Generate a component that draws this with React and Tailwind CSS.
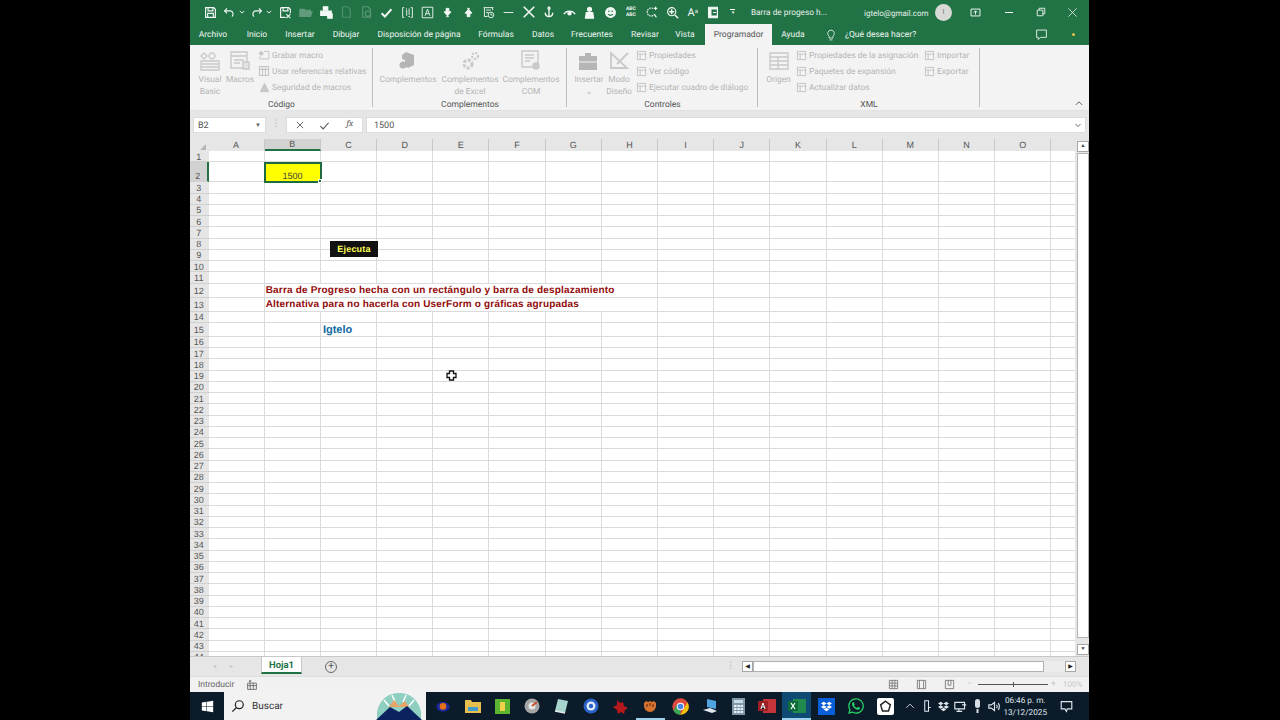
import React from "react";
import { FaWhatsapp, FaDropbox, FaWindows } from "react-icons/fa";

const S = ({ w = 14, h = 14, vb = "0 0 16 16", c = "", children }) => (
  <svg width={w} height={h} viewBox={vb} fill="none" stroke="currentColor" strokeWidth="1.4" className={c}>{children}</svg>
);

const Q = ({ w = "w-[20.3px]", children }) => <div className={`${w} h-full flex items-center justify-center shrink-0`}>{children}</div>;
const Chev = () => <S w={6} h={6}><path d="M2 5l6 6 6-6" strokeWidth="2.500"/></S>;

function QuickBar() {
  return (
    <div className="h-[24px] bg-[#217346] text-[#f4f8f5] flex items-center pl-[10px] shrink-0">
      <Q><S w={13} h={13}><path d="M2 2h10l2 2v10H2z"/><path d="M5 2v4h6V2M4.500 14V9h7v5"/></S></Q>
      <div className="w-[27px] h-full flex items-center justify-center gap-[3px] shrink-0"><S w={13} h={13}><path d="M5 3 2 6l3 3"/><path d="M2 6h7a4 4 0 0 1 2 7"/></S><Chev/></div>
      <div className="w-[28px] h-full flex items-center justify-center gap-[3px] shrink-0"><S w={13} h={13}><path d="M11 3l3 3-3 3"/><path d="M14 6H7a4 4 0 0 0-2 7"/></S><Chev/></div>
      <Q><S w={13} h={13}><path d="M2 2h10l2 2v5M2 2v12h6"/><path d="M5 2v4h6V2M9 10l5 5M14 10l-5 5"/></S></Q>
      <Q><S c="opacity-30"><path d="M1 13V5h5l1 1h6v7zM3 13l2-5h10l-2 5" fill="currentColor"/></S></Q>
      <Q><S><path d="M5 2h5v4H5z" fill="currentColor"/><path d="M2 7h12v5H2z" fill="currentColor"/><path d="M10 10h5v5h-5z" fill="currentColor"/></S></Q>
      <Q><S c="opacity-20"><path d="M4 2h6l3 3v9H4z"/></S></Q>
      <Q><S c="opacity-25"><path d="M3 2h6l3 3v9H3z"/><circle cx="9" cy="10" r="3"/></S></Q>
      <Q><S w={13} h={13}><path d="M2 9l4 4 8-9" strokeWidth="2.400"/></S></Q>
      <Q><S w={13} h={13}><path d="M4 2H2v12h2M12 2h2v12h-2M6 5h1v7M10 3v8M6 3h1M9 13h2" strokeWidth="1.100"/></S></Q>
      <Q><S w={13} h={13}><path d="M1.500 1.500h13v13h-13z" strokeWidth="1.100"/><path d="M5 12l3-8 3 8M6 9.500h4" strokeWidth="1.100"/></S></Q>
      <Q><S w={11} h={11}><path d="M6 2h4v5h3l-5 6-5-6h3zM6 14h4" fill="currentColor"/></S></Q>
      <Q><S w={11} h={11}><path d="M6 14h4V9h3L8 3 3 9h3zM6 2h4" fill="currentColor"/></S></Q>
      <Q><S w={13} h={13}><path d="M2 2h12M3 2v11h4M13 2v3M5 5h6M5 8h3" strokeWidth="1.100"/><circle cx="11" cy="11" r="3.500" strokeWidth="1.100"/><path d="M11 9v2h2" strokeWidth="1.100"/></S></Q>
      <Q><S w={13} h={13}><path d="M2 8h12" strokeWidth="1.100"/></S></Q>
      <Q><S><path d="M2 2l12 12M14 2 2 14" strokeWidth="1.800"/></S></Q>
      <Q><S w={12} h={12}><path d="M8 1v13M3 9c0 3 2 5 5 5s5-2 5-5" strokeWidth="1.800"/><circle cx="8" cy="3" r="1.500"/></S></Q>
      <Q><S w={13} h={13}><path d="M1 10c3-5 11-5 14 0" strokeWidth="1.500"/><circle cx="8" cy="9" r="2" fill="currentColor"/></S></Q>
      <Q><S w={13} h={13}><circle cx="8" cy="4" r="2.500" fill="currentColor"/><path d="M3 15l1-7h8l1 7z" fill="currentColor"/></S></Q>
      <Q><S w={13} h={13}><circle cx="8" cy="8" r="6" fill="currentColor"/><circle cx="6" cy="6.500" r="1" fill="#217346" stroke="none"/><circle cx="10" cy="6.500" r="1" fill="#217346" stroke="none"/><path d="M5 10c2 2 4 2 6 0" stroke="#217346"/></S></Q>
      <Q w="w-[21px]"><div className="text-[5px] leading-[6px] font-bold text-center">ABC<br/>ABC</div></Q>
      <Q w="w-[21px]"><S w={13} h={13}><path d="M10 3a5 5 0 1 0 2 7" strokeDasharray="2 1"/><path d="M12 11l2 3M13 1v4M11 3h4"/></S></Q>
      <Q><S w={13} h={13}><circle cx="7" cy="7" r="5"/><path d="M11 11l4 4M4 7h6M7 4v6" strokeWidth="1.800"/></S></Q>
      <Q><span className="text-[11px] leading-none">A<sup className="text-[6px]">a</sup></span></Q>
      <Q w="w-[21px]"><S w={12} h={13}><path d="M2 1h12v14H2z" fill="currentColor"/><path d="M6 4h7v8H6z" fill="#217346" stroke="none"/><path d="M8 8h4" /></S></Q>
      <div className="w-[18px] flex flex-col items-center gap-[1px]"><div className="w-[5px] h-[1px] bg-white"/><div className="text-[5px] leading-none">▾</div></div>
      <span className="ml-[9px] w-[113px] pt-[3px] text-[8.300px] text-[#e8f0ea] whitespace-nowrap">Barra de progeso h...</span>
      <span className="w-[71px] pt-[3px] text-[8px] text-[#e8f0ea] whitespace-nowrap">igtelo@gmail.com</span>
      <div className="w-[17px] h-[17px] rounded-full bg-[#d9d9d6] text-[#777] text-[7px] flex items-center justify-center">I</div>
      <div className="ml-[15px] w-[18px] flex justify-center"><S w={11} h={11}><path d="M1.500 3h13v10h-13z"/><path d="M8 11V6M5.500 8 8 5.500 10.500 8"/></S></div>
      <div className="ml-[15px] w-[18px] flex justify-center"><div className="w-[8px] h-[1px] bg-white"/></div>
      <div className="ml-[14px] w-[18px] flex justify-center"><S w={10} h={10}><path d="M2 5h9v9H2zM5 5V2h9v9h-3"/></S></div>
      <div className="ml-[14px] w-[18px] flex justify-center"><S w={11} h={11}><path d="M2 2l12 12M14 2 2 14" strokeWidth="1.100"/></S></div>
    </div>
  );
}

const tabs = [["Archivo","w-[46px]"],["Inicio","w-[42px]"],["Insertar","w-[44px]"],["Dibujar","w-[48px]"],["Disposición de página","w-[98px]"],["Fórmulas","w-[56px]"],["Datos","w-[38px]"],["Frecuentes","w-[60px]"],["Revisar","w-[46px]"],["Vista","w-[34px]"]];

function Tabs() {
  return (
    <div className="h-[21px] bg-[#217346] text-[#eef5f0] flex items-stretch text-[8.500px] shrink-0">
      {tabs.map(([t, w]) => <div key={t} className={`${w} flex items-center justify-center whitespace-nowrap shrink-0 pt-[2px]`}>{t}</div>)}
      <div className="w-[67px] bg-[#f3f3f3] text-[#555] flex items-center justify-center shrink-0 ml-[3px] pt-[2px]">Programador</div>
      <div className="w-[42px] flex items-center justify-center shrink-0 pt-[2px]">Ayuda</div>
      <div className="w-[20px] flex items-center justify-center ml-[7px] shrink-0"><S w={12} h={12}><path d="M8 1.500a4.500 4.500 0 0 0-2.500 8.200V12h5V9.700A4.500 4.500 0 0 0 8 1.500zM6 14.500h4" strokeWidth="1.100"/></S></div>
      <div className="flex items-center whitespace-nowrap ml-[4px] pt-[2px]">¿Qué desea hacer?</div>
      <div className="flex-1"/>
      <div className="w-[16px] flex items-center justify-center mr-[16px]"><S w={13} h={13}><path d="M2 2.500h12v9H7l-3 2.500v-2.500H2z" strokeWidth="1.100"/></S></div>
      <div className="w-[16px] flex items-center justify-center mr-[8px]"><div className="w-[3px] h-[3px] rounded-full bg-[#e8c04a]"/></div>
    </div>
  );
}

const Big = ({ w, icon, children }) => (
  <div className={`${w} shrink-0 flex flex-col items-center text-center leading-[12px] pt-[4px]`}>
    <div className="h-[23px] flex items-center justify-center text-[#c9c9c9]">{icon}</div>
    <div className="whitespace-nowrap mt-[2px]">{children}</div>
  </div>
);
const Small = ({ icon, children }) => (
  <div className="h-[16px] flex items-center whitespace-nowrap">
    <span className="w-[14px] h-[14px] flex items-center justify-center text-[#c4c4c4] mr-[1px] shrink-0">{icon}</span>
    <span className="pt-[3px]">{children}</span>
  </div>
);
const Group = ({ w, label, children }) => (
  <div className={`${w} shrink-0 h-full flex flex-col relative`}>
    <div className="flex-1 flex items-start min-h-0">{children}</div>
    <div className="h-[11px] text-center text-[#555] text-[8.500px] leading-[12px]">{label}</div>
    <div className="absolute right-0 top-[3px] bottom-[3px] w-[1px] bg-[#bdbdbd]"/>
  </div>
);

const g = {
  doc: <S w={11} h={11}><path d="M2 2h12v12H2zM2 6h12M6 6v8"/></S>,
  tri: <S w={11} h={11}><path d="M8 2l6 12H2z" fill="#c9c9c9"/></S>,
  gear: <S w={22} h={22} vb="0 0 22 22"><circle cx="9" cy="14" r="4" strokeWidth="3" strokeDasharray="3 1.500"/><circle cx="16" cy="6" r="3" strokeWidth="2.200" strokeDasharray="2 1.500"/></S>,
};

function Ribbon() {
  return (
    <div className="h-[66px] bg-[#f3f3f3] text-[#b4b4b4] text-[8.400px] flex shrink-0 border-b border-[#e2e2e2] relative">
      <Group w="w-[183px]" label="Código">
        <div className="flex">
          <Big w="w-[38px] ml-[1px]" icon={<S w={24} h={22} vb="0 0 24 22"><path d="M3 11h18v9H3zM3 14h18M3 17h18M6 3l3 3-3 3-3-3zM14 3a3 3 0 1 0 .1 0"/></S>}>Visual<br/>Basic</Big>
          <Big w="w-[22px]" icon={<S w={22} h={22} vb="0 0 22 22"><path d="M2 2h16v16H2zM2 6h16M5 10h10M5 13h6"/><path d="M14 12h6v7h-6z" fill="#e3e3e3"/></S>}>Macros</Big>
        </div>
        <div className="ml-[6px] pt-[2px]">
          <Small icon={<S w={12} h={11}><circle cx="4" cy="5" r="2.500" fill="#c4c4c4"/><path d="M8 2h7v11H2V9"/></S>}>Grabar macro</Small>
          <Small icon={<S w={12} h={12}><path d="M2 2h12v12H2zM2 6h12M6 2v12M10 2v12"/></S>}>Usar referencias relativas</Small>
          <Small icon={g.tri}>Seguridad de macros</Small>
        </div>
      </Group>
      <Group w="w-[194px]" label="Complementos">
        <div className="flex pl-[5px]">
          <Big w="w-[60px]" icon={<svg width="20" height="20" viewBox="0 0 20 20" fill="#b5b5b5"><path d="M8 1l8 3v10l-6 3-3-2V9L4 8V4z"/><circle cx="5" cy="14" r="3.500"/></svg>}>Complementos</Big>
          <Big w="w-[64px]" icon={g.gear}>Complementos<br/>de Excel</Big>
          <Big w="w-[58px]" icon={<S w={22} h={22} vb="0 0 22 22"><path d="M2 1h16v16H2zM5 5h9M5 8h9M5 11h5"/><circle cx="16" cy="16" r="3" fill="#c9c9c9"/></S>}>Complementos<br/>COM</Big>
        </div>
      </Group>
      <Group w="w-[191px]" label="Controles">
        <div className="flex pl-[7px]">
          <Big w="w-[30px]" icon={<svg width="22" height="20" viewBox="0 0 22 20" fill="#b5b5b5"><path d="M1 5h18v14H1zM7 5V2h6v3" /><path d="M1 11h18" stroke="#f3f3f3"/></svg>}>Insertar<br/>⌄</Big>
          <Big w="w-[30px]" icon={<S w={22} h={22} vb="0 0 22 22"><path d="M3 3v15h16zM20 3 9 14" strokeWidth="1.800"/></S>}>Modo<br/>Diseño</Big>
          <div className="pt-[2px]">
            <Small icon={g.doc}>Propiedades</Small>
            <Small icon={g.doc}>Ver código</Small>
            <Small icon={g.doc}>Ejecutar cuadro de diálogo</Small>
          </div>
        </div>
      </Group>
      <Group w="w-[222px]" label="XML">
        <div className="flex pl-[7px]">
          <Big w="w-[27px]" icon={<S w={22} h={20} vb="0 0 22 20"><path d="M2 2h18v16H2zM2 6h18M2 10h18M2 14h18M10 6v12"/></S>}>Origen</Big>
          <div className="ml-[2px] pt-[2px] w-[128px]">
            <Small icon={g.doc}>Propiedades de la asignación</Small>
            <Small icon={g.doc}>Paquetes de expansión</Small>
            <Small icon={g.doc}>Actualizar datos</Small>
          </div>
          <div className="pt-[2px]">
            <Small icon={g.doc}>Importar</Small>
            <Small icon={g.doc}>Exportar</Small>
          </div>
        </div>
      </Group>
      <div className="flex-1 flex items-end justify-end pr-[5px] pb-[2px] text-[#555]"><S w={10} h={10}><path d="M3 11l5-5 5 5" strokeWidth="1.500"/></S></div>
    </div>
  );
}

function FormulaBar() {
  return (
    <div className="h-[28px] bg-[#e6e6e6] flex items-start pt-[6px] pl-[3px] pr-[3px] text-[#555] text-[9px] shrink-0">
      <div className="w-[73px] h-[16px] bg-white border border-[#dcdcdc] flex items-center pl-[4px] justify-between pr-[4px]"><span className="pt-[3px]">B2</span><span className="text-[6px] text-[#666]">▼</span></div>
      <div className="w-[20px] h-[16px] flex items-center justify-center text-[#aaa] text-[9px]">⋮</div>
      <div className="w-[77px] h-[16px] bg-white border border-[#dcdcdc] flex items-center shrink-0">
        <div className="w-[26px] flex justify-center"><S w={10} h={10}><path d="M3 3l10 10M13 3 3 13"/></S></div>
        <div className="w-[26px] flex justify-center"><S w={11} h={11}><path d="M2 9l4 4 8-9" strokeWidth="1.600"/></S></div>
        <div className="w-[25px] text-center font-serif italic text-[9px]">fx</div>
      </div>
      <div className="ml-[3px] flex-1 h-[16px] bg-white border border-[#dcdcdc] flex items-center pl-[7px] pr-[3px] justify-between"><span className="pt-[3px]">1500</span><S w={8} h={8}><path d="M3 6l5 5 5-5" strokeWidth="1.800"/></S></div>
    </div>
  );
}

const cols = "ABCDEFGHIJKLMNO".split("");
const rowH = { 2: "h-[20px]", 12: "h-[14px]", 13: "h-[14px]", 15: "h-[14px]" };
const rows = Array.from({ length: 44 }, (_, i) => i + 1);
const cellText = {
  "12B": <span className="relative z-10 text-[10px] font-bold text-[#920b0b] pl-[1px] font-['Liberation_Sans'] tracking-[0.18px]">Barra de Progreso hecha con un rectángulo y barra de desplazamiento</span>,
  "13B": <span className="relative z-10 text-[10px] font-bold text-[#920b0b] pl-[1px] font-['Liberation_Sans'] tracking-[0.18px]">Alternativa para no hacerla con UserForm o gráficas agrupadas</span>,
  "15C": <span className="relative z-10 text-[11px] font-bold text-[#0f6aa3] pl-[2px] pt-[2px] font-['Liberation_Sans']">Igtelo</span>,
};
const noRight = (r, c) => (r === 12 || r === 13) && "BCDEFG".includes(c);

function Sheet() {
  return (
    <div className="flex-1 min-w-0 flex flex-col relative overflow-hidden">
      <div className="h-[12px] flex bg-[#e6e6e6] text-[#555] text-[9px] shrink-0 font-['Liberation_Sans']">
        <div className="w-[18.500px] flex items-end justify-end pr-[3px] pb-[1px] shrink-0"><div className="w-0 h-0 border-l-[6px] border-l-transparent border-b-[6px] border-b-[#b5b5b5]"/></div>
        {cols.map(c => (
          <div key={c} className={`w-[56.2px] shrink-0 flex items-center justify-center border-r border-[#c8c8c8] pt-[2px] ${c === "B" ? "bg-[#d2d2d2] border-b-2 border-b-[#217346]" : ""}`}>{c}</div>
        ))}
        <div className="flex-1"/>
      </div>
      <div className="flex-1 min-h-0 overflow-hidden bg-white">
        {rows.map(r => (
          <div key={r} className={`${rowH[r] || "h-[11.25px]"} flex`}>
            <div className={`w-[18.500px] shrink-0 text-[9px] leading-none text-[#555] flex justify-center pr-[1px] font-['Liberation_Sans'] border-b border-[#d0d0d0] ${r === 2 ? "items-end bg-[#d2d2d2] border-r-2 border-r-[#217346]" : "items-center pt-[2px] bg-[#e6e6e6]"}`}>{r}</div>
            {cols.map(c => (
              <div key={c} className={`w-[56.2px] shrink-0 border-b border-[#dadada] flex items-center whitespace-nowrap relative ${noRight(r, c) ? "" : "border-r"} ${r === 2 && c === "B" ? "bg-[#ffff00]" : ""}`}>
                {cellText[r + c]}
              </div>
            ))}
            <div className="flex-1 border-b border-[#dadada]"/>
          </div>
        ))}
      </div>
      <div className="absolute left-[73.500px] top-[23px] w-[58px] h-[20.500px] border-2 border-[#1e6b41] flex items-end justify-center text-[9px] leading-[10px] text-[#444] font-['Liberation_Sans']">
        <span>1500</span>
        <div className="absolute -right-[2px] -bottom-[2px] w-[4px] h-[4px] bg-[#1e6b41] border border-white"/>
      </div>
      <div className="absolute left-[140px] top-[102px] w-[48px] h-[16px] bg-[#111] text-[#ffff55] text-[9px] font-bold font-['Liberation_Sans'] tracking-[0.2px] flex items-center justify-center pt-[1px]">Ejecuta</div>
      <svg className="absolute left-[256px] top-[231px]" width="11" height="11" viewBox="0 0 11 11"><path d="M3.500 1h4v2.500H10v4H7.500V10h-4V7.500H1v-4h2.500z" fill="#fff" stroke="#111" strokeWidth="1.300"/></svg>
    </div>
  );
}

function VScroll() {
  return (
    <div className="w-[14px] shrink-0 bg-[#e6e6e6] flex flex-col items-start pt-[2px] pb-[1px] pl-[2px]">
      <div className="w-[12px] h-[11px] bg-white border border-[#a8a8a8] flex items-center justify-center text-[#333] text-[5px]">▲</div>
      <div className="w-[12px] h-[485px] bg-white border border-[#b5b5b5] mt-[1px]"/>
      <div className="flex-1"/>
      <div className="w-[12px] h-[11px] bg-white border border-[#a8a8a8] flex items-center justify-center text-[#333] text-[5px]">▼</div>
    </div>
  );
}

function SheetTabs() {
  return (
    <div className="h-[20px] bg-[#e6e6e6] border-t border-[#c8c8c8] flex items-start shrink-0 text-[#555]">
      <div className="w-[71px] flex justify-end gap-[14px] pr-[28px] pt-[5px] text-[#c2c2c2] text-[6px]"><span>◂</span><span>▸</span></div>
      <div className="w-[41px] h-[17px] pt-[4px] bg-white border-b-2 border-b-[#217346] border-x border-x-[#c8c8c8] flex items-center justify-center text-[#217346] font-bold text-[9.500px] shrink-0">Hoja1</div>
      <div className="ml-[23px] mt-[4px] w-[12px] h-[12px] rounded-full border border-[#666] flex items-center justify-center text-[10px] leading-none">+</div>
      <div className="ml-[389px] mt-[4px] text-[#aaa] text-[9px] leading-[10px]">⋮</div>
      <div className="ml-[7px] mt-[4px] w-[334px] h-[11px] flex shrink-0 bg-[#ececec]">
        <div className="w-[11px] h-[11px] bg-white border border-[#a8a8a8] flex items-center justify-center text-[#222] text-[6px]">◀</div>
        <div className="w-[291px] h-[11px] bg-white border border-[#b0b0b0]"/>
        <div className="flex-1"/>
        <div className="w-[11px] h-[11px] bg-white border border-[#a8a8a8] flex items-center justify-center text-[#222] text-[6px]">▶</div>
      </div>
    </div>
  );
}

function Status() {
  return (
    <div className="h-[16px] bg-[#f1f1f1] border-t border-[#dcdcdc] flex items-center text-[#666] text-[8.500px] shrink-0">
      <span className="ml-[8px] w-[49px] pt-[2px]">Introducir</span>
      <S w={10} h={10}><path d="M1 5h14v10H1zM1 9h14M5 5v10M10 5v10M4 1h2v2H4z"/></S>
      <div className="flex-1"/>
      <S w={11} h={11} c="mr-[17px]"><path d="M2 2h12v12H2zM2 6h12M2 10h12M6 2v12M10 2v12" strokeWidth="1.100"/></S>
      <S w={11} h={11} c="mr-[17px]"><path d="M2 2h12v12H2zM5 2v12M11 2v12" strokeWidth="1.100"/></S>
      <S w={11} h={11} c="mr-[12px]"><path d="M2 2h12v12H2zM6 2v7h4V2" strokeWidth="1.100"/></S>
      <span className="text-[#c4c4c4] w-[11px]">−</span>
      <div className="w-[70px] h-[1px] bg-[#555] relative"><div className="absolute left-[35px] -top-[2px] w-[1px] h-[5px] bg-[#555]"/></div>
      <span className="text-[#c4c4c4] ml-[3px] w-[12px]">+</span>
      <span className="text-[#c8c8c8] text-[8px] w-[26px]">100%</span>
    </div>
  );
}

const T = ({ w = "w-[29.600px]", active, bar, children }) => (
  <div className={`${w} h-full shrink-0 flex items-center justify-center relative ${active ? "bg-[#0f4a75]" : ""}`}>
    {children}
    {bar && <div className="absolute left-0 right-0 bottom-0 h-[2px] bg-[#9fd0ec]"/>}
  </div>
);

function Taskbar() {
  return (
    <div className="h-[28px] bg-[#0c1b2a] flex items-stretch shrink-0 overflow-hidden">
      <div className="w-[34px] flex items-center justify-center text-white"><FaWindows size={13}/></div>
      <div className="w-[202px] mr-[2.500px] bg-[#f2f2f2] flex items-center text-[#333] text-[10px] relative overflow-hidden shrink-0">
        <S w={14} h={14} c="ml-[7px] mr-[7px] text-[#222]"><circle cx="9.500" cy="6.500" r="4.500"/><path d="M6 10l-4.500 4.500"/></S>
        Buscar
        <div className="absolute right-[4px] top-0 w-[46px] h-[28px] overflow-hidden">
          <svg width="46" height="28" viewBox="0 0 46 28">
            <path d="M1 20C3 8 12 1 23 1s20 7 22 19v8H1z" fill="#8ecfc0"/>
            <path d="M8 8l5 6M16 3l3 7M30 3l-3 7M38 8l-5 6" stroke="#fff" strokeWidth="1.500"/>
            <path d="M18 8l5 6 6-5 4 6-20 0z" fill="#e8a468"/>
            <path d="M0 28l14-13 9 5 8-6 15 14z" fill="#0a2260"/>
          </svg>
        </div>
      </div>
      <T><svg width="14" height="14" viewBox="0 0 16 16"><ellipse cx="8" cy="9" rx="7.500" ry="5.500" fill="#1a2a9c"/><circle cx="8" cy="8.500" r="3.800" fill="#e8711c"/></svg></T>
      <T><svg width="16" height="14" viewBox="0 0 16 14"><path d="M0 1h6l1 2h9v11H0z" fill="#e9bf4d"/><path d="M3 8h10v4H3z" fill="#3f9bd0"/></svg></T>
      <T><svg width="15" height="15" viewBox="0 0 15 15"><path d="M0 0h15v15H0z" fill="#5cb531"/><path d="M5 3h5v9H5z" fill="#f0d24a"/></svg></T>
      <T><svg width="16" height="16" viewBox="0 0 16 16"><circle cx="8" cy="8" r="7.500" fill="#a5a5a5"/><circle cx="8" cy="8" r="3.500" fill="#e8e8e8"/><path d="M8 8l5-4" stroke="#c8502c" strokeWidth="2"/></svg></T>
      <T><svg width="15" height="16" viewBox="0 0 15 16"><path d="M4 1l10 2-3 12-10-2z" fill="#a8d4d0"/><path d="M1 13l10 2" stroke="#e8e8e8" strokeWidth="1.500"/></svg></T>
      <T><svg width="16" height="16" viewBox="0 0 16 16"><circle cx="8" cy="8" r="7.500" fill="#2a63c8"/><circle cx="8" cy="8" r="4.500" fill="#dfe9f8"/><circle cx="8" cy="8" r="2.200" fill="#2a63c8"/></svg></T>
      <T><svg width="17" height="17" viewBox="0 0 17 17" fill="#b5191c"><path d="M5 2l3 3 3-1 1 4 4 2-3 2-1 4-3-2-3 2-1-4-4-3 4-2z"/></svg></T>
      <T bar><svg width="16" height="16" viewBox="0 0 16 16"><path d="M2 8a6 6 0 0 0 12 0V5l-2-2-2 1-2-1-2 1-2-1-2 2z" fill="#d8722f"/><path d="M5 6v3M8 5v3M11 6v3" stroke="#5c2a10"/></svg></T>
      <T><svg width="17" height="17" viewBox="0 0 48 48"><circle cx="24" cy="24" r="23" fill="#dd4b3e"/><path d="M24 24 4 35a23 23 0 0 0 20 12z" fill="#3aa757"/><path d="M44 12a23 23 0 0 1-20 35l10-18z" fill="#f4c20d"/><path d="M4 35 14 18 24 24z" fill="#3aa757"/><circle cx="24" cy="24" r="10.500" fill="#fff"/><circle cx="24" cy="24" r="8" fill="#4a86e8"/></svg></T>
      <T><svg width="16" height="16" viewBox="0 0 16 16"><path d="M5 1l9 2v8l-9-2z" fill="#4ea5e0"/><path d="M1 12l7-2 7 3-5 2z" fill="#dfe8ee"/></svg></T>
      <T w="w-[28px]"><svg width="13" height="17" viewBox="0 0 13 17"><path d="M0 0h13v17H0z" fill="#7f97a8"/><path d="M2 2h9v3H2z" fill="#c8dce8"/><path d="M2 7h2.500v2H2zM5.300 7h2.500v2H5.300zM8.500 7H11v2H8.500zM2 10h2.500v2H2zM5.300 10h2.500v2H5.300zM8.500 10H11v2H8.500zM2 13h2.500v2H2zM5.300 13h2.500v2H5.300zM8.500 13H11v2H8.500z" fill="#e8eff4"/></svg></T>
      <T w="w-[30px]"><svg width="18" height="16" viewBox="0 0 18 16"><path d="M5 1h13v14H5z" fill="#c3353a"/><path d="M0 3h10v10H0z" fill="#9c1f24"/><path d="M3 11l2-6 2 6M3.800 9h2.500" stroke="#fff" strokeWidth="1"/></svg></T>
      <T w="w-[29px]" active bar><svg width="18" height="16" viewBox="0 0 18 16"><path d="M5 1h13v14H5z" fill="#1f8a4c"/><path d="M0 3h10v10H0z" fill="#0f6b38"/><path d="M3 5l4 6M7 5l-4 6" stroke="#fff" strokeWidth="1.200"/></svg></T>
      <T><div className="w-[17px] h-[17px] bg-[#0a5fd8] flex items-center justify-center text-white"><FaDropbox size={11}/></div></T>
      <T><FaWhatsapp size={18} className="text-[#25d366]"/></T>
      <T><div className="w-[17px] h-[17px] bg-white rounded-[2px] flex items-center justify-center"><svg width="13" height="13" viewBox="0 0 16 16" fill="none" stroke="#222" strokeWidth="1.800"><path d="M8 1.500l6 4.500-2.300 7.500H4.300L2 6z"/></svg></div></T>
      <div className="flex-1 flex items-center text-[#dfe6ec] pl-[1px]">
        <div className="w-[17px] flex justify-center"><S w={10} h={10}><path d="M2 11l6-6 6 6"/></S></div>
        <div className="w-[17px] flex justify-center"><S w={12} h={14}><path d="M5 1h5v14H5zM10 10h3"/></S></div>
        <div className="w-[17px] flex justify-center"><FaDropbox size={11}/></div>
        <div className="w-[17px] flex justify-center"><S w={13} h={13}><path d="M1 3h12v8H1zM6 11v3M3 14h7M10 6h5"/></S></div>
        <div className="w-[17px] flex justify-center"><svg width="9" height="14" viewBox="0 0 9 14" fill="#d8dee4"><rect x="2" y="0" width="5" height="9" rx="2.500"/><path d="M3.500 10h2v4h-2z"/></svg></div>
        <div className="w-[17px] flex justify-center"><S w={13} h={13}><path d="M1 6v4h3l4 3V3L4 6zM10.500 6c1 1 1 3 0 4M12.500 4c2 2 2 6 0 8"/></S></div>
        <div className="w-[44px] pt-[2px] text-center text-[8.200px] leading-[12px] whitespace-nowrap">06:46 p. m.<br/>13/12/2025</div>
        <div className="ml-[13px] flex"><S w={13} h={13}><path d="M1.500 2h13v9H9l-1 3-2-3H1.500z"/></S></div>
      </div>
    </div>
  );
}

export default function App() {
  return (
    <div className="w-[1280px] h-[720px] bg-black overflow-hidden font-['Roboto','Noto_Sans',sans-serif] [text-rendering:geometricPrecision]">
      <div className="ml-[190px] w-[899px] h-full flex flex-col">
        <QuickBar/>
        <Tabs/>
        <Ribbon/>
        <FormulaBar/>
        <div className="flex-1 min-h-0 flex">
          <Sheet/>
          <VScroll/>
        </div>
        <SheetTabs/>
        <Status/>
        <Taskbar/>
      </div>
    </div>
  );
}
